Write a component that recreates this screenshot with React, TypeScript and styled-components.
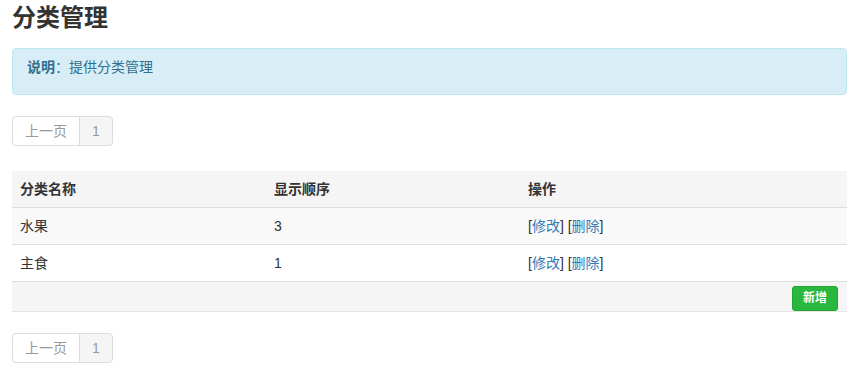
import React from 'react';
import styled, { createGlobalStyle } from 'styled-components';

const GlobalStyle = createGlobalStyle`
  body {
    margin: 0;
    background: #fff;
    color: #333;
    font-family: "Liberation Sans", "Noto Sans CJK SC", Arial, sans-serif;
    font-size: 14px;
  }
`;

const Page = styled.div`
  padding: 0 12px;
`;

const Title = styled.h1`
  margin: 0 0 13px;
  font-size: 24px;
  line-height: 35px;
  font-weight: bold;
  color: #333;
`;

const Alert = styled.div`
  background: #d9edf7;
  border: 1px solid #bce8f1;
  border-radius: 4px;
  color: #31708f;
  padding: 8px 14px 17px;
  line-height: 20px;
  margin-bottom: 21px;
`;

const Pager = styled.ul<{ $gap: number }>`
  display: flex;
  list-style: none;
  padding: 0;
  margin: 0 0 ${p => p.$gap}px;
`;

const PageItem = styled.li<{ $active?: boolean }>`
  padding: 4px 12px;
  line-height: 20px;
  border: 1px solid #ddd;
  color: #999;
  background: ${p => (p.$active ? '#f5f5f5' : '#fff')};
  & + & {
    margin-left: -1px;
  }
  &:first-child {
    border-radius: 4px 0 0 4px;
  }
  &:last-child {
    border-radius: 0 4px 4px 0;
  }
`;

const Table = styled.table`
  width: 100%;
  border-collapse: collapse;
  margin-bottom: 21px;
`;

const Th = styled.th<{ $w?: number }>`
  text-align: left;
  font-weight: bold;
  padding: 8px;
  line-height: 20px;
  background: #f5f5f5;
  border-bottom: 1px solid #ddd;
  width: ${p => (p.$w ? `${p.$w}px` : 'auto')};
`;

const Row = styled.tr<{ $striped?: boolean }>`
  background: ${p => (p.$striped ? '#f9f9f9' : '#fff')};
`;

const Td = styled.td`
  padding: 8px;
  line-height: 20px;
  border-bottom: 1px solid #ddd;
`;

const FootCell = styled.td`
  background: #f5f5f5;
  padding: 4px 9px 0;
  height: 25px;
  text-align: right;
  border-bottom: 1px solid #e5e5e5;
  vertical-align: top;
`;

const Link = styled.a`
  color: #337ab7;
  text-decoration: none;
`;

const AddButton = styled.button`
  font-family: inherit;
  font-size: 12px;
  font-weight: bold;
  line-height: 17px;
  color: #fff;
  background: #29b83d;
  border: 1px solid #22a534;
  border-radius: 3px;
  padding: 3px 10px;
`;

const rows = [
  { name: '水果', order: 3 },
  { name: '主食', order: 1 },
];

const Pagination: React.FC<{ gap: number }> = ({ gap }) => (
  <Pager $gap={gap}>
    <PageItem>上一页</PageItem>
    <PageItem $active>1</PageItem>
  </Pager>
);

const App: React.FC = () => (
  <Page>
    <GlobalStyle />
    <Title>分类管理</Title>
    <Alert>
      <b>说明</b>：提供分类管理
    </Alert>
    <Pagination gap={25} />
    <Table>
      <thead>
        <tr>
          <Th $w={238}>分类名称</Th>
          <Th $w={238}>显示顺序</Th>
          <Th>操作</Th>
        </tr>
      </thead>
      <tbody>
        {rows.map((r, i) => (
          <Row key={r.name} $striped={i % 2 === 0}>
            <Td>{r.name}</Td>
            <Td>{r.order}</Td>
            <Td>
              [<Link href="#">修改</Link>] [<Link href="#">删除</Link>]
            </Td>
          </Row>
        ))}
        <tr>
          <FootCell colSpan={3}>
            <AddButton>新增</AddButton>
          </FootCell>
        </tr>
      </tbody>
    </Table>
    <Pagination gap={0} />
  </Page>
);

export default App;
